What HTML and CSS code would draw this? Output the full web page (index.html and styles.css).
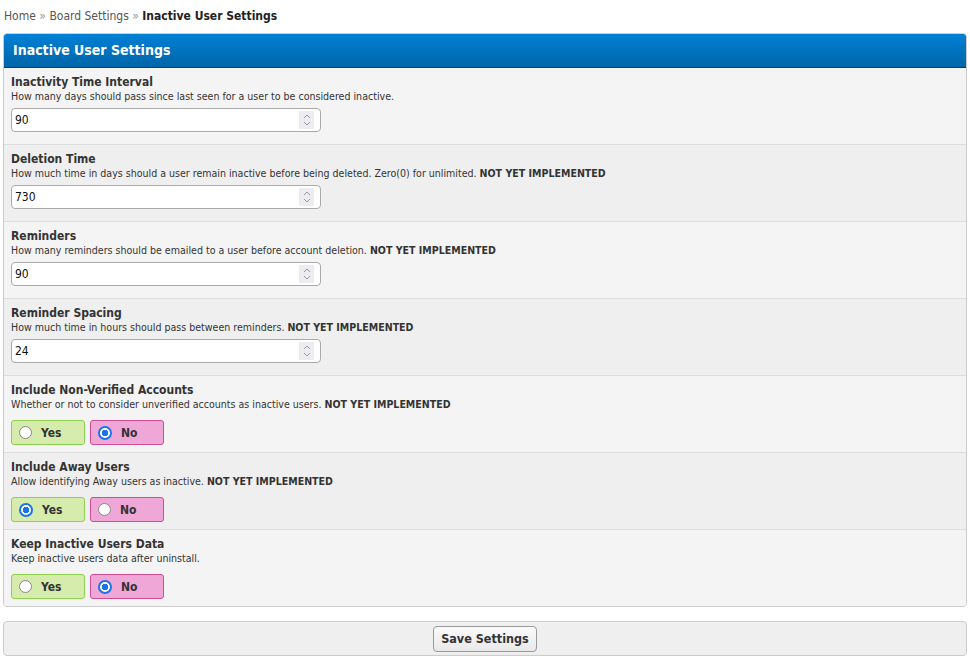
FILE: index.html
```html
<!DOCTYPE html>
<html>
<head>
<meta charset="utf-8">
<link rel="stylesheet" href="styles.css">
</head>
<body>
<div class="page">
  <div class="breadcrumb"><span class="crumb">Home</span> <span class="sep">»</span> <span class="crumb">Board Settings</span> <span class="sep">»</span> <span class="current">Inactive User Settings</span></div>
  <div class="panel">
    <div class="panel-head">Inactive User Settings</div>
    <div class="row odd">
      <div class="title">Inactivity Time Interval</div>
      <div class="desc">How many days should pass since last seen for a user to be considered inactive.</div>
      <div class="numbox"><span class="val">90</span><span class="spin"><svg width="10" height="14" viewBox="0 0 10 14"><path d="M2 5 L5 2 L8 5 M2 9 L5 12 L8 9" fill="none" stroke="#999" stroke-width="1"/></svg></span></div>
    </div>
    <div class="row even">
      <div class="title">Deletion Time</div>
      <div class="desc">How much time in days should a user remain inactive before being deleted. Zero(0) for unlimited. <b>NOT YET IMPLEMENTED</b></div>
      <div class="numbox"><span class="val">730</span><span class="spin"><svg width="10" height="14" viewBox="0 0 10 14"><path d="M2 5 L5 2 L8 5 M2 9 L5 12 L8 9" fill="none" stroke="#999" stroke-width="1"/></svg></span></div>
    </div>
    <div class="row odd">
      <div class="title">Reminders</div>
      <div class="desc">How many reminders should be emailed to a user before account deletion. <b>NOT YET IMPLEMENTED</b></div>
      <div class="numbox"><span class="val">90</span><span class="spin"><svg width="10" height="14" viewBox="0 0 10 14"><path d="M2 5 L5 2 L8 5 M2 9 L5 12 L8 9" fill="none" stroke="#999" stroke-width="1"/></svg></span></div>
    </div>
    <div class="row even">
      <div class="title">Reminder Spacing</div>
      <div class="desc">How much time in hours should pass between reminders. <b>NOT YET IMPLEMENTED</b></div>
      <div class="numbox"><span class="val">24</span><span class="spin"><svg width="10" height="14" viewBox="0 0 10 14"><path d="M2 5 L5 2 L8 5 M2 9 L5 12 L8 9" fill="none" stroke="#999" stroke-width="1"/></svg></span></div>
    </div>
    <div class="row odd">
      <div class="title">Include Non-Verified Accounts</div>
      <div class="desc">Whether or not to consider unverified accounts as inactive users. <b>NOT YET IMPLEMENTED</b></div>
      <div class="yesno">
        <span class="opt yes"><span class="radio"></span>Yes</span>
        <span class="opt no"><span class="radio on"></span>No</span>
      </div>
    </div>
    <div class="row even">
      <div class="title">Include Away Users</div>
      <div class="desc">Allow identifying Away users as inactive. <b>NOT YET IMPLEMENTED</b></div>
      <div class="yesno">
        <span class="opt yes"><span class="radio on"></span>Yes</span>
        <span class="opt no"><span class="radio"></span>No</span>
      </div>
    </div>
    <div class="row odd last">
      <div class="title">Keep Inactive Users Data</div>
      <div class="desc">Keep inactive users data after uninstall.</div>
      <div class="yesno">
        <span class="opt yes"><span class="radio"></span>Yes</span>
        <span class="opt no"><span class="radio on"></span>No</span>
      </div>
    </div>
  </div>
  <div class="footer"><span class="btn">Save Settings</span></div>
</div>
</body>
</html>
```
FILE: styles.css
```css
html, body { margin: 0; padding: 0; background: #fff; }
body { font-family: "DejaVu Sans Condensed", "DejaVu Sans", sans-serif; color: #333; }
.page { padding: 8px 3px 0 3px; }
.breadcrumb { font-size: 12px; color: #555; padding-left: 1px; height: 17px; line-height: 17px; margin-bottom: 8px; }
.breadcrumb .sep { color: #999; }
.breadcrumb .current { font-weight: bold; color: #222; }
.panel { border: 1px solid #ccc; border-radius: 4px; overflow: hidden; background: #f3f3f3; }
.panel-head { height: 33px; line-height: 33px; padding-left: 9px; color: #fff; font-weight: bold; font-size: 14px; background: linear-gradient(#0080d6, #0066a8); border-bottom: 1px solid #0f3a5b; }
.row { padding: 7px 7px 0 7px; height: 69px; border-bottom: 1px solid #ddd; }
.row.last { border-bottom: 0; height: 69px; }
.row.odd { background: #f4f4f4; }
.row.even { background: #efefef; }
.title { font-weight: bold; font-size: 12px; color: #333; line-height: 15px; }
.desc { font-size: 10.55px; color: #333; line-height: 13px; }
.numbox { margin-top: 5px; height: 22px; border: 1px solid #aaa; border-radius: 4px; background: #fff; display: flex; align-items: center; justify-content: space-between; padding: 0 6px 0 3px; box-sizing: content-box; width: 299px; }
.val { font-size: 12px; color: #111; }
.spin { width: 15px; height: 18px; background: #ececf1; display: flex; align-items: center; justify-content: center; }
.yesno { margin-top: 9px; display: flex; gap: 5px; }
.opt { box-sizing: border-box; width: 74px; height: 25px; border: 1px solid; border-radius: 3px; display: flex; align-items: center; padding-left: 7px; gap: 9px; font-weight: bold; font-size: 12px; color: #333; }
.opt.yes { background: #d6ecad; border-color: #8fcf4f; }
.opt.no { background: #efa7d7; border-color: #cf4e93; }
.radio { width: 11px; height: 11px; border: 1px solid #888; border-radius: 50%; background: #fff; box-sizing: content-box; }
.radio.on { border: 1px solid #1a73e8; background: radial-gradient(circle, #1a73e8 0 3px, #fff 3.5px); width: 10px; height: 10px; border-width: 2px; }
.footer { margin-top: 14px; border: 1px solid #ccc; border-radius: 4px; background: #efefef; height: 33px; display: flex; align-items: center; justify-content: center; }
.btn { box-sizing: border-box; height: 26px; padding: 0 7px; border: 1px solid #999; border-radius: 4px; background: linear-gradient(#fafafa, #e9e9e9); font-weight: bold; font-size: 12.5px; color: #333; display: flex; align-items: center; }
```
